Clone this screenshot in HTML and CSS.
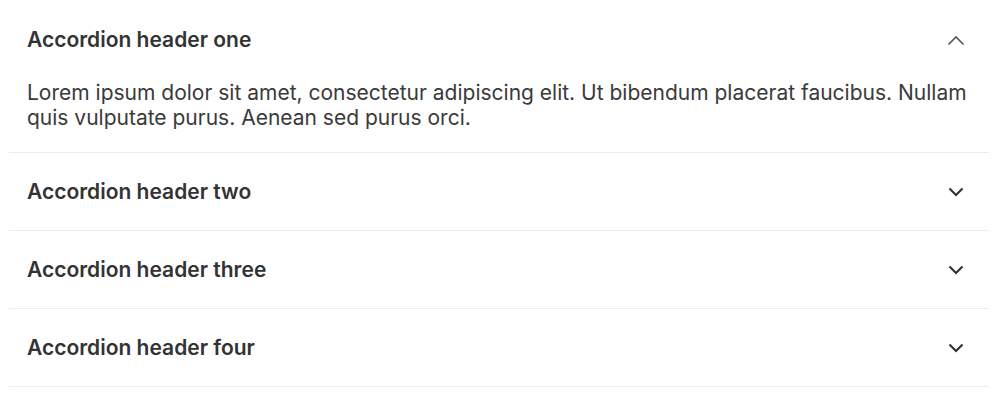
FILE: index.html
```html
<!DOCTYPE html>
<html>
<head>
<meta charset="utf-8">
<link rel="stylesheet" href="styles.css">
</head>
<body>
<div class="accordion">
  <div class="item open">
    <div class="header">
      <span class="title">Accordion header one</span>
      <svg class="chev up" width="18" height="12" viewBox="0 0 18 12"><path d="M1.5 10.5 L9 3 L16.5 10.5" fill="none" stroke="#555" stroke-width="1.6"/></svg>
    </div>
    <div class="body">Lorem ipsum dolor sit amet, consectetur adipiscing elit. Ut bibendum placerat faucibus. Nullam quis vulputate purus. Aenean sed purus orci.</div>
  </div>
  <div class="item">
    <div class="header">
      <span class="title">Accordion header two</span>
      <svg class="chev" width="18" height="12" viewBox="0 0 18 12"><path d="M2.5 2.5 L9 9 L15.5 2.5" fill="none" stroke="#333" stroke-width="2.2"/></svg>
    </div>
  </div>
  <div class="item">
    <div class="header">
      <span class="title">Accordion header three</span>
      <svg class="chev" width="18" height="12" viewBox="0 0 18 12"><path d="M2.5 2.5 L9 9 L15.5 2.5" fill="none" stroke="#333" stroke-width="2.2"/></svg>
    </div>
  </div>
  <div class="item">
    <div class="header">
      <span class="title">Accordion header four</span>
      <svg class="chev" width="18" height="12" viewBox="0 0 18 12"><path d="M2.5 2.5 L9 9 L15.5 2.5" fill="none" stroke="#333" stroke-width="2.2"/></svg>
    </div>
  </div>
</div>
</body>
</html>
```
FILE: styles.css
```css
html, body {
  margin: 0;
  background: #fff;
}
body {
  padding: 1px 9px 0 9px;
  font-family: Inter, "Noto Sans", sans-serif;
  color: #333;
}
.accordion {
  display: flex;
  flex-direction: column;
}
.item {
  border-bottom: 1px solid #ececec;
}
.header {
  display: flex;
  align-items: center;
  justify-content: space-between;
  padding: 26px 24px 25px 18px;
  font-size: 21px;
  line-height: 26px;
  font-weight: 600;
  color: #333;
}
.chev {
  display: block;
}
.body {
  padding: 2px 18px 22px 18px;
  font-size: 21px;
  line-height: 25px;
  color: #3a3a3a;
}
```
